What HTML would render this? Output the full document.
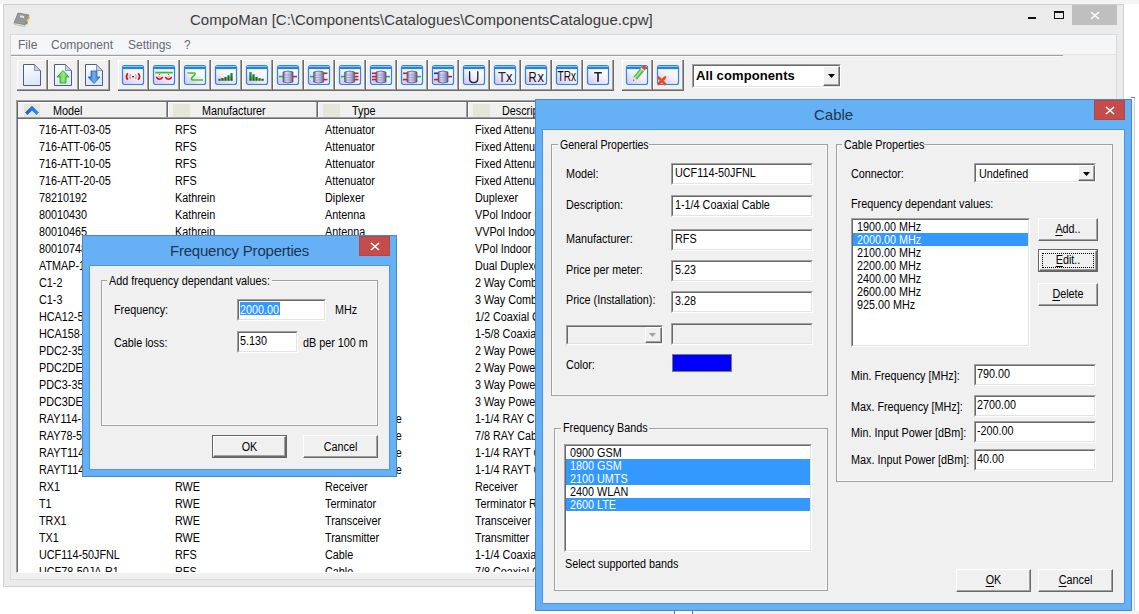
<!DOCTYPE html><html><head><meta charset="utf-8"><style>
html,body{margin:0;padding:0;width:1139px;height:614px;overflow:hidden;background:#fff;font-family:'Liberation Sans', sans-serif}
div{position:absolute}
svg{position:absolute;overflow:visible}

</style></head><body>
<div style="left:0px;top:0px;width:1139px;height:4px;background:#f3f4f6"></div>
<div style="left:3px;top:4px;width:1121px;height:583px;background:#ebebeb;border:1px solid #d0d0d0;box-sizing:border-box"></div>
<div style="left:1072px;top:5px;width:45px;height:20px;background:#bfbfbf"></div>
<svg style="left:1090px;top:11px" width="10" height="9"><path d="M1 1 L9 8 M9 1 L1 8" stroke="#fff" stroke-width="1.5"/></svg>
<div style="left:1028px;top:17px;width:8px;height:2px;background:#111"></div>
<div style="left:1054px;top:11px;width:10px;height:8px;border:1px solid #111;border-top-width:2px;box-sizing:border-box"></div>
<div style="left:190px;top:10px;font-size:15px;line-height:20px;color:#3b3b3b;white-space:pre;">CompoMan [C:\Components\Catalogues\ComponentsCatalogue.cpw]</div>
<div style="left:10px;top:34px;width:1107px;height:546px;background:#f0f0f0;border:1px solid #dadada;box-sizing:border-box"></div>
<div style="left:11px;top:35px;width:1105px;height:19px;background:#f5f6f7"></div>
<div style="left:11px;top:54px;width:1105px;height:1px;background:#e2e2e2"></div>
<div style="left:11px;top:55px;width:1052px;height:1px;background:#a0a0a0"></div>
<div style="left:11px;top:56px;width:1052px;height:1px;background:#fbfbfb"></div>
<div style="left:18px;top:35px;font-size:12px;line-height:20px;color:#676775;white-space:pre;">File</div>
<div style="left:51px;top:35px;font-size:12px;line-height:20px;color:#676775;white-space:pre;">Component</div>
<div style="left:128px;top:35px;font-size:12px;line-height:20px;color:#676775;white-space:pre;">Settings</div>
<div style="left:184px;top:35px;font-size:12px;line-height:20px;color:#676775;white-space:pre;">?</div>
<div style="left:17px;top:60px;width:31px;height:31px;background:#6a6a6a"></div>
<div style="left:17px;top:60px;width:30px;height:30px;background:#a0a0a0"></div>
<div style="left:17px;top:60px;width:29px;height:29px;background:#fff"></div>
<div style="left:18px;top:61px;width:28px;height:28px;background:#f0f0f0"></div>
<div style="left:48px;top:60px;width:31px;height:31px;background:#6a6a6a"></div>
<div style="left:48px;top:60px;width:30px;height:30px;background:#a0a0a0"></div>
<div style="left:48px;top:60px;width:29px;height:29px;background:#fff"></div>
<div style="left:49px;top:61px;width:28px;height:28px;background:#f0f0f0"></div>
<div style="left:79px;top:60px;width:31px;height:31px;background:#6a6a6a"></div>
<div style="left:79px;top:60px;width:30px;height:30px;background:#a0a0a0"></div>
<div style="left:79px;top:60px;width:29px;height:29px;background:#fff"></div>
<div style="left:80px;top:61px;width:28px;height:28px;background:#f0f0f0"></div>
<div style="left:118px;top:60px;width:31px;height:31px;background:#6a6a6a"></div>
<div style="left:118px;top:60px;width:30px;height:30px;background:#a0a0a0"></div>
<div style="left:118px;top:60px;width:29px;height:29px;background:#fff"></div>
<div style="left:119px;top:61px;width:28px;height:28px;background:#f0f0f0"></div>
<div style="left:149px;top:60px;width:31px;height:31px;background:#6a6a6a"></div>
<div style="left:149px;top:60px;width:30px;height:30px;background:#a0a0a0"></div>
<div style="left:149px;top:60px;width:29px;height:29px;background:#fff"></div>
<div style="left:150px;top:61px;width:28px;height:28px;background:#f0f0f0"></div>
<div style="left:180px;top:60px;width:31px;height:31px;background:#6a6a6a"></div>
<div style="left:180px;top:60px;width:30px;height:30px;background:#a0a0a0"></div>
<div style="left:180px;top:60px;width:29px;height:29px;background:#fff"></div>
<div style="left:181px;top:61px;width:28px;height:28px;background:#f0f0f0"></div>
<div style="left:211px;top:60px;width:31px;height:31px;background:#6a6a6a"></div>
<div style="left:211px;top:60px;width:30px;height:30px;background:#a0a0a0"></div>
<div style="left:211px;top:60px;width:29px;height:29px;background:#fff"></div>
<div style="left:212px;top:61px;width:28px;height:28px;background:#f0f0f0"></div>
<div style="left:242px;top:60px;width:31px;height:31px;background:#6a6a6a"></div>
<div style="left:242px;top:60px;width:30px;height:30px;background:#a0a0a0"></div>
<div style="left:242px;top:60px;width:29px;height:29px;background:#fff"></div>
<div style="left:243px;top:61px;width:28px;height:28px;background:#f0f0f0"></div>
<div style="left:273px;top:60px;width:31px;height:31px;background:#6a6a6a"></div>
<div style="left:273px;top:60px;width:30px;height:30px;background:#a0a0a0"></div>
<div style="left:273px;top:60px;width:29px;height:29px;background:#fff"></div>
<div style="left:274px;top:61px;width:28px;height:28px;background:#f0f0f0"></div>
<div style="left:304px;top:60px;width:31px;height:31px;background:#6a6a6a"></div>
<div style="left:304px;top:60px;width:30px;height:30px;background:#a0a0a0"></div>
<div style="left:304px;top:60px;width:29px;height:29px;background:#fff"></div>
<div style="left:305px;top:61px;width:28px;height:28px;background:#f0f0f0"></div>
<div style="left:335px;top:60px;width:31px;height:31px;background:#6a6a6a"></div>
<div style="left:335px;top:60px;width:30px;height:30px;background:#a0a0a0"></div>
<div style="left:335px;top:60px;width:29px;height:29px;background:#fff"></div>
<div style="left:336px;top:61px;width:28px;height:28px;background:#f0f0f0"></div>
<div style="left:366px;top:60px;width:31px;height:31px;background:#6a6a6a"></div>
<div style="left:366px;top:60px;width:30px;height:30px;background:#a0a0a0"></div>
<div style="left:366px;top:60px;width:29px;height:29px;background:#fff"></div>
<div style="left:367px;top:61px;width:28px;height:28px;background:#f0f0f0"></div>
<div style="left:397px;top:60px;width:31px;height:31px;background:#6a6a6a"></div>
<div style="left:397px;top:60px;width:30px;height:30px;background:#a0a0a0"></div>
<div style="left:397px;top:60px;width:29px;height:29px;background:#fff"></div>
<div style="left:398px;top:61px;width:28px;height:28px;background:#f0f0f0"></div>
<div style="left:428px;top:60px;width:31px;height:31px;background:#6a6a6a"></div>
<div style="left:428px;top:60px;width:30px;height:30px;background:#a0a0a0"></div>
<div style="left:428px;top:60px;width:29px;height:29px;background:#fff"></div>
<div style="left:429px;top:61px;width:28px;height:28px;background:#f0f0f0"></div>
<div style="left:459px;top:60px;width:31px;height:31px;background:#6a6a6a"></div>
<div style="left:459px;top:60px;width:30px;height:30px;background:#a0a0a0"></div>
<div style="left:459px;top:60px;width:29px;height:29px;background:#fff"></div>
<div style="left:460px;top:61px;width:28px;height:28px;background:#f0f0f0"></div>
<div style="left:490px;top:60px;width:31px;height:31px;background:#6a6a6a"></div>
<div style="left:490px;top:60px;width:30px;height:30px;background:#a0a0a0"></div>
<div style="left:490px;top:60px;width:29px;height:29px;background:#fff"></div>
<div style="left:491px;top:61px;width:28px;height:28px;background:#f0f0f0"></div>
<div style="left:521px;top:60px;width:31px;height:31px;background:#6a6a6a"></div>
<div style="left:521px;top:60px;width:30px;height:30px;background:#a0a0a0"></div>
<div style="left:521px;top:60px;width:29px;height:29px;background:#fff"></div>
<div style="left:522px;top:61px;width:28px;height:28px;background:#f0f0f0"></div>
<div style="left:552px;top:60px;width:31px;height:31px;background:#6a6a6a"></div>
<div style="left:552px;top:60px;width:30px;height:30px;background:#a0a0a0"></div>
<div style="left:552px;top:60px;width:29px;height:29px;background:#fff"></div>
<div style="left:553px;top:61px;width:28px;height:28px;background:#f0f0f0"></div>
<div style="left:583px;top:60px;width:31px;height:31px;background:#6a6a6a"></div>
<div style="left:583px;top:60px;width:30px;height:30px;background:#a0a0a0"></div>
<div style="left:583px;top:60px;width:29px;height:29px;background:#fff"></div>
<div style="left:584px;top:61px;width:28px;height:28px;background:#f0f0f0"></div>
<div style="left:622px;top:60px;width:31px;height:31px;background:#6a6a6a"></div>
<div style="left:622px;top:60px;width:30px;height:30px;background:#a0a0a0"></div>
<div style="left:622px;top:60px;width:29px;height:29px;background:#fff"></div>
<div style="left:623px;top:61px;width:28px;height:28px;background:#f0f0f0"></div>
<div style="left:653px;top:60px;width:31px;height:31px;background:#6a6a6a"></div>
<div style="left:653px;top:60px;width:30px;height:30px;background:#a0a0a0"></div>
<div style="left:653px;top:60px;width:29px;height:29px;background:#fff"></div>
<div style="left:654px;top:61px;width:28px;height:28px;background:#f0f0f0"></div>
<svg width="0" height="0" style="position:absolute"><defs>
<linearGradient id="wb" x1="0.8" y1="0" x2="0.2" y2="1"><stop offset="0" stop-color="#ffffff"/><stop offset="0.45" stop-color="#f6f5fd"/><stop offset="1" stop-color="#d4ccf0"/></linearGradient>
<linearGradient id="pg" x1="0" y1="0" x2="0.3" y2="1"><stop offset="0" stop-color="#ffffff"/><stop offset="1" stop-color="#dce8f8"/></linearGradient>
<linearGradient id="cy" x1="0" y1="0" x2="1" y2="0"><stop offset="0" stop-color="#5c5c90"/><stop offset="0.3" stop-color="#dcdcf4"/><stop offset="0.65" stop-color="#b4b4dc"/><stop offset="1" stop-color="#5a5a88"/></linearGradient>
<linearGradient id="ga" x1="0" y1="0" x2="1" y2="0"><stop offset="0" stop-color="#2fb52f"/><stop offset="0.5" stop-color="#8ef07a"/><stop offset="1" stop-color="#3cc03c"/></linearGradient>
<linearGradient id="ba" x1="0" y1="0" x2="1" y2="0"><stop offset="0" stop-color="#1f5fb8"/><stop offset="0.5" stop-color="#6fb0f0"/><stop offset="1" stop-color="#2a6cc8"/></linearGradient>
<linearGradient id="gp" x1="0" y1="0" x2="0" y2="1"><stop offset="0" stop-color="#3aa83a"/><stop offset="0.45" stop-color="#9af08a"/><stop offset="1" stop-color="#2e9a2e"/></linearGradient>
<linearGradient id="gb" x1="0" y1="7" x2="0" y2="16" gradientUnits="userSpaceOnUse"><stop offset="0" stop-color="#30a030"/><stop offset="1" stop-color="#0b5a10"/></linearGradient>
</defs></svg>
<svg style="left:23px;top:64px" width="19" height="23"><path d="M0.5 0.5 H11.5 L17.5 6.5 V21.5 H0.5 Z" fill="url(#pg)" stroke="#4d5c80"/><path d="M11.5 0.5 V6.5 H17.5 Z" fill="#c4d2e8" stroke="#6a7898" stroke-width="0.7"/></svg>
<svg style="left:54px;top:64px" width="19" height="23"><path d="M0.5 0.5 H11.5 L17.5 6.5 V21.5 H0.5 Z" fill="url(#pg)" stroke="#4d5c80"/><path d="M11.5 0.5 V6.5 H17.5 Z" fill="#c4d2e8" stroke="#6a7898" stroke-width="0.7"/><path d="M9 6.5 L15 13 H12 V19 H6 V13 H3 Z" fill="url(#ga)" stroke="#2a9a2a" stroke-width="0.8"/></svg>
<svg style="left:85px;top:64px" width="19" height="23"><path d="M0.5 0.5 H11.5 L17.5 6.5 V21.5 H0.5 Z" fill="url(#pg)" stroke="#4d5c80"/><path d="M11.5 0.5 V6.5 H17.5 Z" fill="#c4d2e8" stroke="#6a7898" stroke-width="0.7"/><path d="M6 7 H12 V13 H15 L9 19.5 L3 13 H6 Z" fill="url(#ba)" stroke="#2a64b8" stroke-width="0.8"/></svg>
<svg style="left:122px;top:65px" width="22" height="20"><rect x="0.5" y="0.5" width="21" height="19" rx="2" fill="url(#wb)" stroke="#2f84dc" stroke-width="1.2"/><rect x="1" y="1" width="20" height="1" fill="#7ccaf8"/><rect x="1" y="2" width="20" height="2" fill="#2c80d6"/><rect x="1.2" y="4" width="19.6" height="1" fill="#d8eefc"/><path d="M5.8 8.2 Q3.2 11.5 5.8 14.8" fill="none" stroke="#e01010" stroke-width="1.8"/><path d="M16.2 8.2 Q18.8 11.5 16.2 14.8" fill="none" stroke="#e01010" stroke-width="1.8"/><path d="M8.4 9 Q7.2 11.5 8.4 14" fill="none" stroke="#d06060" stroke-width="0.8"/><path d="M13.6 9 Q14.8 11.5 13.6 14" fill="none" stroke="#d06060" stroke-width="0.8"/><rect x="10.2" y="11" width="1.8" height="1.3" fill="#222"/></svg>
<svg style="left:153px;top:65px" width="22" height="20"><rect x="0.5" y="0.5" width="21" height="19" rx="2" fill="url(#wb)" stroke="#2f84dc" stroke-width="1.2"/><rect x="1" y="1" width="20" height="1" fill="#7ccaf8"/><rect x="1" y="2" width="20" height="2" fill="#2c80d6"/><rect x="1.2" y="4" width="19.6" height="1" fill="#d8eefc"/><path d="M2.3 7.6 H19.9" stroke="#30c030" stroke-width="1.8"/><path d="M3.3 12 Q6.5 16.5 9.7 12" fill="none" stroke="#e01010" stroke-width="1.7"/><path d="M12.3 12 Q15.5 16.5 18.7 12" fill="none" stroke="#e01010" stroke-width="1.7"/><path d="M5 11.2 Q6.5 12.5 8 11.2 M14 11.2 Q15.5 12.5 17 11.2" fill="none" stroke="#e09090" stroke-width="0.6"/><circle cx="6.5" cy="9.6" r="0.5" fill="#444"/><circle cx="15.5" cy="9.6" r="0.5" fill="#444"/></svg>
<svg style="left:184px;top:65px" width="22" height="20"><rect x="0.5" y="0.5" width="21" height="19" rx="2" fill="url(#wb)" stroke="#2f84dc" stroke-width="1.2"/><rect x="1" y="1" width="20" height="1" fill="#7ccaf8"/><rect x="1" y="2" width="20" height="2" fill="#2c80d6"/><rect x="1.2" y="4" width="19.6" height="1" fill="#d8eefc"/><path d="M3.5 8 H10 Q12 8 10.5 10 L8 12.5 Q6.5 14.5 9 15 H19" fill="none" stroke="#3cc828" stroke-width="1.7"/></svg>
<svg style="left:215px;top:65px" width="22" height="20"><rect x="0.5" y="0.5" width="21" height="19" rx="2" fill="url(#wb)" stroke="#2f84dc" stroke-width="1.2"/><rect x="1" y="1" width="20" height="1" fill="#7ccaf8"/><rect x="1" y="2" width="20" height="2" fill="#2c80d6"/><rect x="1.2" y="4" width="19.6" height="1" fill="#d8eefc"/><path d="M4.5 13.8 V15.8 M7.5 13 V15.8 M10.5 12 V15.8 M13.5 10.2 V15.8 M16.5 8 V15.8" stroke="url(#gb)" stroke-width="2.3"/></svg>
<svg style="left:246px;top:65px" width="22" height="20"><rect x="0.5" y="0.5" width="21" height="19" rx="2" fill="url(#wb)" stroke="#2f84dc" stroke-width="1.2"/><rect x="1" y="1" width="20" height="1" fill="#7ccaf8"/><rect x="1" y="2" width="20" height="2" fill="#2c80d6"/><rect x="1.2" y="4" width="19.6" height="1" fill="#d8eefc"/><path d="M4.5 7 V15.8 M7.5 9.2 V15.8 M10.5 12 V15.8 M13.5 13.2 V15.8 M16.5 13.8 V15.8" stroke="url(#gb)" stroke-width="2.3"/></svg>
<svg style="left:277px;top:65px" width="22" height="20"><rect x="0.5" y="0.5" width="21" height="19" rx="2" fill="url(#wb)" stroke="#2f84dc" stroke-width="1.2"/><rect x="1" y="1" width="20" height="1" fill="#7ccaf8"/><rect x="1" y="2" width="20" height="2" fill="#2c80d6"/><rect x="1.2" y="4" width="19.6" height="1" fill="#d8eefc"/><path d="M2 11.6 H6" stroke="#22bb33" stroke-width="1.6"/><path d="M16 11.6 H20" stroke="#e01818" stroke-width="1.6"/><path d="M6 7 Q11 5 16 7 V17 Q11 19 6 17 Z" fill="url(#cy)" stroke="#4a4a78" stroke-width="0.7"/><path d="M7 10 H15 M7 12.5 H15 M7 15 H15" stroke="#8a8ab8" stroke-width="0.6"/></svg>
<svg style="left:308px;top:65px" width="22" height="20"><rect x="0.5" y="0.5" width="21" height="19" rx="2" fill="url(#wb)" stroke="#2f84dc" stroke-width="1.2"/><rect x="1" y="1" width="20" height="1" fill="#7ccaf8"/><rect x="1" y="2" width="20" height="2" fill="#2c80d6"/><rect x="1.2" y="4" width="19.6" height="1" fill="#d8eefc"/><path d="M2 11.6 H6" stroke="#22bb33" stroke-width="1.6"/><path d="M15.5 8.3 H19.5" stroke="#e01818" stroke-width="1.6"/><path d="M15.5 14.6 H19.5" stroke="#e01818" stroke-width="1.6"/><path d="M5.699999999999999 7 Q10.7 5 15.7 7 V17 Q10.7 19 5.699999999999999 17 Z" fill="url(#cy)" stroke="#4a4a78" stroke-width="0.7"/><path d="M6.699999999999999 10 H14.7 M6.699999999999999 12.5 H14.7 M6.699999999999999 15 H14.7" stroke="#8a8ab8" stroke-width="0.6"/></svg>
<svg style="left:339px;top:65px" width="22" height="20"><rect x="0.5" y="0.5" width="21" height="19" rx="2" fill="url(#wb)" stroke="#2f84dc" stroke-width="1.2"/><rect x="1" y="1" width="20" height="1" fill="#7ccaf8"/><rect x="1" y="2" width="20" height="2" fill="#2c80d6"/><rect x="1.2" y="4" width="19.6" height="1" fill="#d8eefc"/><path d="M2 11.6 H6" stroke="#22bb33" stroke-width="1.6"/><path d="M15.5 8.3 H19.5" stroke="#e01818" stroke-width="1.6"/><path d="M15.5 11.6 H19.5" stroke="#e01818" stroke-width="1.6"/><path d="M15.5 14.6 H19.5" stroke="#e01818" stroke-width="1.6"/><path d="M5.699999999999999 7 Q10.7 5 15.7 7 V17 Q10.7 19 5.699999999999999 17 Z" fill="url(#cy)" stroke="#4a4a78" stroke-width="0.7"/><path d="M6.699999999999999 10 H14.7 M6.699999999999999 12.5 H14.7 M6.699999999999999 15 H14.7" stroke="#8a8ab8" stroke-width="0.6"/></svg>
<svg style="left:370px;top:65px" width="22" height="20"><rect x="0.5" y="0.5" width="21" height="19" rx="2" fill="url(#wb)" stroke="#2f84dc" stroke-width="1.2"/><rect x="1" y="1" width="20" height="1" fill="#7ccaf8"/><rect x="1" y="2" width="20" height="2" fill="#2c80d6"/><rect x="1.2" y="4" width="19.6" height="1" fill="#d8eefc"/><path d="M2 8.3 H6" stroke="#e01818" stroke-width="1.6"/><path d="M2 11.6 H6" stroke="#e01818" stroke-width="1.6"/><path d="M2 14.6 H6" stroke="#e01818" stroke-width="1.6"/><path d="M16 11.6 H20" stroke="#22bb33" stroke-width="1.6"/><path d="M6 7 Q11 5 16 7 V17 Q11 19 6 17 Z" fill="url(#cy)" stroke="#4a4a78" stroke-width="0.7"/><path d="M7 10 H15 M7 12.5 H15 M7 15 H15" stroke="#8a8ab8" stroke-width="0.6"/></svg>
<svg style="left:401px;top:65px" width="22" height="20"><rect x="0.5" y="0.5" width="21" height="19" rx="2" fill="url(#wb)" stroke="#2f84dc" stroke-width="1.2"/><rect x="1" y="1" width="20" height="1" fill="#7ccaf8"/><rect x="1" y="2" width="20" height="2" fill="#2c80d6"/><rect x="1.2" y="4" width="19.6" height="1" fill="#d8eefc"/><path d="M2 8.3 H6" stroke="#e01818" stroke-width="1.6"/><path d="M2 14.6 H6" stroke="#e01818" stroke-width="1.6"/><path d="M16 11.6 H20" stroke="#22bb33" stroke-width="1.6"/><path d="M6 7 Q11 5 16 7 V17 Q11 19 6 17 Z" fill="url(#cy)" stroke="#4a4a78" stroke-width="0.7"/><path d="M7 10 H15 M7 12.5 H15 M7 15 H15" stroke="#8a8ab8" stroke-width="0.6"/></svg>
<svg style="left:432px;top:65px" width="22" height="20"><rect x="0.5" y="0.5" width="21" height="19" rx="2" fill="url(#wb)" stroke="#2f84dc" stroke-width="1.2"/><rect x="1" y="1" width="20" height="1" fill="#7ccaf8"/><rect x="1" y="2" width="20" height="2" fill="#2c80d6"/><rect x="1.2" y="4" width="19.6" height="1" fill="#d8eefc"/><path d="M2 8.3 H6" stroke="#2020d0" stroke-width="1.6"/><path d="M2 14.6 H6" stroke="#e01818" stroke-width="1.6"/><path d="M16 11.6 H20" stroke="#a01090" stroke-width="1.6"/><path d="M6 7 Q11 5 16 7 V17 Q11 19 6 17 Z" fill="url(#cy)" stroke="#4a4a78" stroke-width="0.7"/><path d="M7 10 H15 M7 12.5 H15 M7 15 H15" stroke="#8a8ab8" stroke-width="0.6"/></svg>
<svg style="left:463px;top:65px" width="22" height="20"><rect x="0.5" y="0.5" width="21" height="19" rx="2" fill="url(#wb)" stroke="#2f84dc" stroke-width="1.2"/><rect x="1" y="1" width="20" height="1" fill="#7ccaf8"/><rect x="1" y="2" width="20" height="2" fill="#2c80d6"/><rect x="1.2" y="4" width="19.6" height="1" fill="#d8eefc"/><path d="M6.6 6.3 V13.5 Q6.6 17.6 10.7 17.6 Q14.8 17.6 14.8 13.5 V6.3" fill="none" stroke="#1a1a28" stroke-width="1.3"/></svg>
<svg style="left:494px;top:65px" width="22" height="20"><rect x="0.5" y="0.5" width="21" height="19" rx="2" fill="url(#wb)" stroke="#2f84dc" stroke-width="1.2"/><rect x="1" y="1" width="20" height="1" fill="#7ccaf8"/><rect x="1" y="2" width="20" height="2" fill="#2c80d6"/><rect x="1.2" y="4" width="19.6" height="1" fill="#d8eefc"/><text x="4" y="17" font-family="Liberation Sans" font-size="14.5" fill="#2a2a3a" textLength="8" lengthAdjust="spacingAndGlyphs">T</text><text x="12" y="17" font-family="Liberation Sans" font-size="14" fill="#111" textLength="6.5" lengthAdjust="spacingAndGlyphs">x</text></svg>
<svg style="left:525px;top:65px" width="22" height="20"><rect x="0.5" y="0.5" width="21" height="19" rx="2" fill="url(#wb)" stroke="#2f84dc" stroke-width="1.2"/><rect x="1" y="1" width="20" height="1" fill="#7ccaf8"/><rect x="1" y="2" width="20" height="2" fill="#2c80d6"/><rect x="1.2" y="4" width="19.6" height="1" fill="#d8eefc"/><text x="3.5" y="17" font-family="Liberation Sans" font-size="14.5" fill="#111" textLength="8.2" lengthAdjust="spacingAndGlyphs">R</text><text x="12.6" y="17" font-family="Liberation Sans" font-size="14" fill="#111" textLength="6.5" lengthAdjust="spacingAndGlyphs">x</text></svg>
<svg style="left:556px;top:65px" width="22" height="20"><rect x="0.5" y="0.5" width="21" height="19" rx="2" fill="url(#wb)" stroke="#2f84dc" stroke-width="1.2"/><rect x="1" y="1" width="20" height="1" fill="#7ccaf8"/><rect x="1" y="2" width="20" height="2" fill="#2c80d6"/><rect x="1.2" y="4" width="19.6" height="1" fill="#d8eefc"/><text x="1.6" y="16.2" font-family="Liberation Sans" font-size="13.8" fill="#111" textLength="18.6" lengthAdjust="spacingAndGlyphs">TRx</text></svg>
<svg style="left:587px;top:65px" width="22" height="20"><rect x="0.5" y="0.5" width="21" height="19" rx="2" fill="url(#wb)" stroke="#2f84dc" stroke-width="1.2"/><rect x="1" y="1" width="20" height="1" fill="#7ccaf8"/><rect x="1" y="2" width="20" height="2" fill="#2c80d6"/><rect x="1.2" y="4" width="19.6" height="1" fill="#d8eefc"/><path d="M7.2 7.7 H14.8 M11 7.7 V16.8" stroke="#1a1a28" stroke-width="1.6"/></svg>
<svg style="left:626px;top:65px" width="22" height="20"><rect x="0.5" y="0.5" width="21" height="19" rx="2" fill="url(#wb)" stroke="#2f84dc" stroke-width="1.2"/><rect x="1" y="1" width="20" height="1" fill="#7ccaf8"/><rect x="1" y="2" width="20" height="2" fill="#2c80d6"/><rect x="1.2" y="4" width="19.6" height="1" fill="#d8eefc"/></svg>
<svg style="left:620px;top:60px" width="30" height="30"><g transform="translate(13 20.8) rotate(-50)"><path d="M0 0 L3.5 -2.3 V2.3 Z" fill="#e8dcc8"/><path d="M0 0 L1.3 -0.9 V0.9 Z" fill="#555"/><rect x="3.5" y="-2.3" width="11.5" height="4.6" fill="url(#gp)"/><path d="M15 -2.3 H17.5 Q19.5 -2.3 19.5 0 Q19.5 2.3 17.5 2.3 H15 Z" fill="#e05030"/><rect x="14.2" y="-2.3" width="1.2" height="4.6" fill="#f0e0e0"/></g></svg>
<svg style="left:657px;top:65px" width="22" height="20"><rect x="0.5" y="0.5" width="21" height="19" rx="2" fill="url(#wb)" stroke="#2f84dc" stroke-width="1.2"/><rect x="1" y="1" width="20" height="1" fill="#7ccaf8"/><rect x="1" y="2" width="20" height="2" fill="#2c80d6"/><rect x="1.2" y="4" width="19.6" height="1" fill="#d8eefc"/></svg>
<svg style="left:656px;top:75px" width="12" height="12"><path d="M2.5 2.5 L9 9 M9 2.5 L2.5 9" stroke="#f04a1a" stroke-width="2.6" stroke-linecap="round"/></svg>
<svg style="left:13px;top:12px" width="18" height="16"><path d="M5 1 L16 3 L12 13 L1 11 Z" fill="#979797" stroke="#7d7d7d" stroke-width="0.8"/><path d="M1 11 L12 13 L11.5 14.5 L1.5 12.5 Z" fill="#f0f0f0" stroke="#8a8a8a" stroke-width="0.5"/><rect x="7" y="3.6" width="4" height="2" fill="#e8e8e8" transform="rotate(10 9 5)"/><path d="M15.5 4.5 L17 5 L16 7.5 L14.5 7 Z" fill="#e8a040"/><path d="M14.5 7 L16 7.5 L15 10 L13.5 9.5 Z" fill="#f0d040"/><path d="M13.5 9.5 L15 10 L14 12.5 L12.5 12 Z" fill="#48b040"/></svg>
<div style="left:692px;top:64px;width:149px;height:24px;background:#fff;border-top:1px solid #a0a0a0;border-left:1px solid #a0a0a0;border-bottom:1px solid #fff;border-right:1px solid #fff;box-sizing:border-box"></div>
<div style="left:693px;top:65px;width:147px;height:22px;border-top:1px solid #696969;border-left:1px solid #696969;border-bottom:1px solid #e3e3e3;border-right:1px solid #e3e3e3;box-sizing:border-box"></div>
<div style="left:823px;top:66px;width:17px;height:20px;background:#f0f0f0;border-top:1px solid #fff;border-left:1px solid #fff;border-bottom:1px solid #696969;border-right:1px solid #696969;box-sizing:border-box"></div>
<div style="left:824px;top:67px;width:15px;height:18px;border-bottom:1px solid #a0a0a0;border-right:1px solid #a0a0a0;box-sizing:border-box"></div>
<svg style="left:828px;top:74px" width="8" height="5"><path d="M0 0 H7 L3.5 4 Z" fill="#000"/></svg>
<div style="left:696px;top:66px;font-size:13px;line-height:20px;color:#000;white-space:pre;font-weight:bold;letter-spacing:0.1px">All components</div>
<div style="left:16px;top:100px;width:1100px;height:473px;background:#fff;border-top:1px solid #a0a0a0;border-left:1px solid #a0a0a0;border-bottom:1px solid #fff;box-sizing:border-box"></div>
<div style="left:17px;top:101px;width:1099px;height:471px;border-top:1px solid #696969;border-left:1px solid #696969;box-sizing:border-box"></div>
<div style="left:18px;top:102px;width:1098px;height:15px;background:#f0f0f0;border-top:1px solid #fff"></div>
<div style="left:18px;top:117px;width:1098px;height:1px;background:#a0a0a0"></div>
<div style="left:18px;top:118px;width:1098px;height:1px;background:#696969"></div>
<div style="left:166px;top:102px;width:1px;height:15px;background:#a0a0a0"></div>
<div style="left:167px;top:102px;width:1px;height:15px;background:#696969"></div>
<div style="left:168px;top:103px;width:1px;height:14px;background:#fff"></div>
<div style="left:316px;top:102px;width:1px;height:15px;background:#a0a0a0"></div>
<div style="left:317px;top:102px;width:1px;height:15px;background:#696969"></div>
<div style="left:318px;top:103px;width:1px;height:14px;background:#fff"></div>
<div style="left:466px;top:102px;width:1px;height:15px;background:#a0a0a0"></div>
<div style="left:467px;top:102px;width:1px;height:15px;background:#696969"></div>
<div style="left:468px;top:103px;width:1px;height:14px;background:#fff"></div>
<div style="left:616px;top:102px;width:1px;height:15px;background:#a0a0a0"></div>
<div style="left:617px;top:102px;width:1px;height:15px;background:#696969"></div>
<div style="left:618px;top:103px;width:1px;height:14px;background:#fff"></div>
<div style="left:24px;top:104px;width:16px;height:13px;background:#e6e6d8"></div>
<svg style="left:24px;top:104px" width="16" height="13"><defs><linearGradient id="ar" x1="0" y1="0" x2="1" y2="0"><stop offset="0" stop-color="#1a5ccc"/><stop offset="1" stop-color="#2590f0"/></linearGradient></defs><path d="M2.3 9.8 L8 4.1 L13.7 9.8" fill="none" stroke="url(#ar)" stroke-width="3.4"/></svg>
<div style="left:173px;top:104px;width:17px;height:13px;background:#e6e6d8"></div>
<div style="left:323px;top:104px;width:17px;height:13px;background:#e6e6d8"></div>
<div style="left:473px;top:104px;width:17px;height:13px;background:#e6e6d8"></div>
<div style="left:53px;top:101px;font-size:12px;line-height:20px;color:#000;white-space:pre;;transform:scaleX(0.9);transform-origin:left top">Model</div>
<div style="left:202px;top:101px;font-size:12px;line-height:20px;color:#000;white-space:pre;;transform:scaleX(0.9);transform-origin:left top">Manufacturer</div>
<div style="left:352px;top:101px;font-size:12px;line-height:20px;color:#000;white-space:pre;;transform:scaleX(0.9);transform-origin:left top">Type</div>
<div style="left:502px;top:101px;font-size:12px;line-height:20px;color:#000;white-space:pre;;transform:scaleX(0.9);transform-origin:left top">Description</div>
<div style="left:18px;top:119px;width:1098px;height:453px;overflow:hidden">
<div style="left:21px;top:1px;font-size:12px;line-height:20px;color:#000;white-space:pre;;transform:scaleX(0.9);transform-origin:left top">716-ATT-03-05</div>
<div style="left:157px;top:1px;font-size:12px;line-height:20px;color:#000;white-space:pre;;transform:scaleX(0.9);transform-origin:left top">RFS</div>
<div style="left:307px;top:1px;font-size:12px;line-height:20px;color:#000;white-space:pre;;transform:scaleX(0.9);transform-origin:left top">Attenuator</div>
<div style="left:457px;top:1px;font-size:12px;line-height:20px;color:#000;white-space:pre;;transform:scaleX(0.9);transform-origin:left top">Fixed Attenuator</div>
<div style="left:21px;top:18px;font-size:12px;line-height:20px;color:#000;white-space:pre;;transform:scaleX(0.9);transform-origin:left top">716-ATT-06-05</div>
<div style="left:157px;top:18px;font-size:12px;line-height:20px;color:#000;white-space:pre;;transform:scaleX(0.9);transform-origin:left top">RFS</div>
<div style="left:307px;top:18px;font-size:12px;line-height:20px;color:#000;white-space:pre;;transform:scaleX(0.9);transform-origin:left top">Attenuator</div>
<div style="left:457px;top:18px;font-size:12px;line-height:20px;color:#000;white-space:pre;;transform:scaleX(0.9);transform-origin:left top">Fixed Attenuator</div>
<div style="left:21px;top:35px;font-size:12px;line-height:20px;color:#000;white-space:pre;;transform:scaleX(0.9);transform-origin:left top">716-ATT-10-05</div>
<div style="left:157px;top:35px;font-size:12px;line-height:20px;color:#000;white-space:pre;;transform:scaleX(0.9);transform-origin:left top">RFS</div>
<div style="left:307px;top:35px;font-size:12px;line-height:20px;color:#000;white-space:pre;;transform:scaleX(0.9);transform-origin:left top">Attenuator</div>
<div style="left:457px;top:35px;font-size:12px;line-height:20px;color:#000;white-space:pre;;transform:scaleX(0.9);transform-origin:left top">Fixed Attenuator</div>
<div style="left:21px;top:52px;font-size:12px;line-height:20px;color:#000;white-space:pre;;transform:scaleX(0.9);transform-origin:left top">716-ATT-20-05</div>
<div style="left:157px;top:52px;font-size:12px;line-height:20px;color:#000;white-space:pre;;transform:scaleX(0.9);transform-origin:left top">RFS</div>
<div style="left:307px;top:52px;font-size:12px;line-height:20px;color:#000;white-space:pre;;transform:scaleX(0.9);transform-origin:left top">Attenuator</div>
<div style="left:457px;top:52px;font-size:12px;line-height:20px;color:#000;white-space:pre;;transform:scaleX(0.9);transform-origin:left top">Fixed Attenuator</div>
<div style="left:21px;top:69px;font-size:12px;line-height:20px;color:#000;white-space:pre;;transform:scaleX(0.9);transform-origin:left top">78210192</div>
<div style="left:157px;top:69px;font-size:12px;line-height:20px;color:#000;white-space:pre;;transform:scaleX(0.9);transform-origin:left top">Kathrein</div>
<div style="left:307px;top:69px;font-size:12px;line-height:20px;color:#000;white-space:pre;;transform:scaleX(0.9);transform-origin:left top">Diplexer</div>
<div style="left:457px;top:69px;font-size:12px;line-height:20px;color:#000;white-space:pre;;transform:scaleX(0.9);transform-origin:left top">Duplexer</div>
<div style="left:21px;top:86px;font-size:12px;line-height:20px;color:#000;white-space:pre;;transform:scaleX(0.9);transform-origin:left top">80010430</div>
<div style="left:157px;top:86px;font-size:12px;line-height:20px;color:#000;white-space:pre;;transform:scaleX(0.9);transform-origin:left top">Kathrein</div>
<div style="left:307px;top:86px;font-size:12px;line-height:20px;color:#000;white-space:pre;;transform:scaleX(0.9);transform-origin:left top">Antenna</div>
<div style="left:457px;top:86px;font-size:12px;line-height:20px;color:#000;white-space:pre;;transform:scaleX(0.9);transform-origin:left top">VPol Indoor Omni</div>
<div style="left:21px;top:103px;font-size:12px;line-height:20px;color:#000;white-space:pre;;transform:scaleX(0.9);transform-origin:left top">80010465</div>
<div style="left:157px;top:103px;font-size:12px;line-height:20px;color:#000;white-space:pre;;transform:scaleX(0.9);transform-origin:left top">Kathrein</div>
<div style="left:307px;top:103px;font-size:12px;line-height:20px;color:#000;white-space:pre;;transform:scaleX(0.9);transform-origin:left top">Antenna</div>
<div style="left:457px;top:103px;font-size:12px;line-height:20px;color:#000;white-space:pre;;transform:scaleX(0.9);transform-origin:left top">VVPol Indoor Omni</div>
<div style="left:21px;top:120px;font-size:12px;line-height:20px;color:#000;white-space:pre;;transform:scaleX(0.9);transform-origin:left top">80010748</div>
<div style="left:157px;top:120px;font-size:12px;line-height:20px;color:#000;white-space:pre;;transform:scaleX(0.9);transform-origin:left top">Kathrein</div>
<div style="left:307px;top:120px;font-size:12px;line-height:20px;color:#000;white-space:pre;;transform:scaleX(0.9);transform-origin:left top">Antenna</div>
<div style="left:457px;top:120px;font-size:12px;line-height:20px;color:#000;white-space:pre;;transform:scaleX(0.9);transform-origin:left top">VPol Indoor Omni</div>
<div style="left:21px;top:137px;font-size:12px;line-height:20px;color:#000;white-space:pre;;transform:scaleX(0.9);transform-origin:left top">ATMAP-1</div>
<div style="left:157px;top:137px;font-size:12px;line-height:20px;color:#000;white-space:pre;;transform:scaleX(0.9);transform-origin:left top">RFS</div>
<div style="left:307px;top:137px;font-size:12px;line-height:20px;color:#000;white-space:pre;;transform:scaleX(0.9);transform-origin:left top">Duplexer</div>
<div style="left:457px;top:137px;font-size:12px;line-height:20px;color:#000;white-space:pre;;transform:scaleX(0.9);transform-origin:left top">Dual Duplexer</div>
<div style="left:21px;top:154px;font-size:12px;line-height:20px;color:#000;white-space:pre;;transform:scaleX(0.9);transform-origin:left top">C1-2</div>
<div style="left:157px;top:154px;font-size:12px;line-height:20px;color:#000;white-space:pre;;transform:scaleX(0.9);transform-origin:left top">RFS</div>
<div style="left:307px;top:154px;font-size:12px;line-height:20px;color:#000;white-space:pre;;transform:scaleX(0.9);transform-origin:left top">Combiner</div>
<div style="left:457px;top:154px;font-size:12px;line-height:20px;color:#000;white-space:pre;;transform:scaleX(0.9);transform-origin:left top">2 Way Combiner</div>
<div style="left:21px;top:171px;font-size:12px;line-height:20px;color:#000;white-space:pre;;transform:scaleX(0.9);transform-origin:left top">C1-3</div>
<div style="left:157px;top:171px;font-size:12px;line-height:20px;color:#000;white-space:pre;;transform:scaleX(0.9);transform-origin:left top">RFS</div>
<div style="left:307px;top:171px;font-size:12px;line-height:20px;color:#000;white-space:pre;;transform:scaleX(0.9);transform-origin:left top">Combiner</div>
<div style="left:457px;top:171px;font-size:12px;line-height:20px;color:#000;white-space:pre;;transform:scaleX(0.9);transform-origin:left top">3 Way Combiner</div>
<div style="left:21px;top:188px;font-size:12px;line-height:20px;color:#000;white-space:pre;;transform:scaleX(0.9);transform-origin:left top">HCA12-50J</div>
<div style="left:157px;top:188px;font-size:12px;line-height:20px;color:#000;white-space:pre;;transform:scaleX(0.9);transform-origin:left top">RFS</div>
<div style="left:307px;top:188px;font-size:12px;line-height:20px;color:#000;white-space:pre;;transform:scaleX(0.9);transform-origin:left top">Cable</div>
<div style="left:457px;top:188px;font-size:12px;line-height:20px;color:#000;white-space:pre;;transform:scaleX(0.9);transform-origin:left top">1/2 Coaxial Cable</div>
<div style="left:21px;top:205px;font-size:12px;line-height:20px;color:#000;white-space:pre;;transform:scaleX(0.9);transform-origin:left top">HCA158-50J</div>
<div style="left:157px;top:205px;font-size:12px;line-height:20px;color:#000;white-space:pre;;transform:scaleX(0.9);transform-origin:left top">RFS</div>
<div style="left:307px;top:205px;font-size:12px;line-height:20px;color:#000;white-space:pre;;transform:scaleX(0.9);transform-origin:left top">Cable</div>
<div style="left:457px;top:205px;font-size:12px;line-height:20px;color:#000;white-space:pre;;transform:scaleX(0.9);transform-origin:left top">1-5/8 Coaxial Cable</div>
<div style="left:21px;top:222px;font-size:12px;line-height:20px;color:#000;white-space:pre;;transform:scaleX(0.9);transform-origin:left top">PDC2-350</div>
<div style="left:157px;top:222px;font-size:12px;line-height:20px;color:#000;white-space:pre;;transform:scaleX(0.9);transform-origin:left top">RFS</div>
<div style="left:307px;top:222px;font-size:12px;line-height:20px;color:#000;white-space:pre;;transform:scaleX(0.9);transform-origin:left top">Splitter</div>
<div style="left:457px;top:222px;font-size:12px;line-height:20px;color:#000;white-space:pre;;transform:scaleX(0.9);transform-origin:left top">2 Way Power Divider</div>
<div style="left:21px;top:239px;font-size:12px;line-height:20px;color:#000;white-space:pre;;transform:scaleX(0.9);transform-origin:left top">PDC2DE</div>
<div style="left:157px;top:239px;font-size:12px;line-height:20px;color:#000;white-space:pre;;transform:scaleX(0.9);transform-origin:left top">RFS</div>
<div style="left:307px;top:239px;font-size:12px;line-height:20px;color:#000;white-space:pre;;transform:scaleX(0.9);transform-origin:left top">Splitter</div>
<div style="left:457px;top:239px;font-size:12px;line-height:20px;color:#000;white-space:pre;;transform:scaleX(0.9);transform-origin:left top">2 Way Power Divider</div>
<div style="left:21px;top:256px;font-size:12px;line-height:20px;color:#000;white-space:pre;;transform:scaleX(0.9);transform-origin:left top">PDC3-350</div>
<div style="left:157px;top:256px;font-size:12px;line-height:20px;color:#000;white-space:pre;;transform:scaleX(0.9);transform-origin:left top">RFS</div>
<div style="left:307px;top:256px;font-size:12px;line-height:20px;color:#000;white-space:pre;;transform:scaleX(0.9);transform-origin:left top">Splitter</div>
<div style="left:457px;top:256px;font-size:12px;line-height:20px;color:#000;white-space:pre;;transform:scaleX(0.9);transform-origin:left top">3 Way Power Divider</div>
<div style="left:21px;top:273px;font-size:12px;line-height:20px;color:#000;white-space:pre;;transform:scaleX(0.9);transform-origin:left top">PDC3DE</div>
<div style="left:157px;top:273px;font-size:12px;line-height:20px;color:#000;white-space:pre;;transform:scaleX(0.9);transform-origin:left top">RFS</div>
<div style="left:307px;top:273px;font-size:12px;line-height:20px;color:#000;white-space:pre;;transform:scaleX(0.9);transform-origin:left top">Splitter</div>
<div style="left:457px;top:273px;font-size:12px;line-height:20px;color:#000;white-space:pre;;transform:scaleX(0.9);transform-origin:left top">3 Way Power Divider</div>
<div style="left:21px;top:290px;font-size:12px;line-height:20px;color:#000;white-space:pre;;transform:scaleX(0.9);transform-origin:left top">RAY114-50JFNA</div>
<div style="left:157px;top:290px;font-size:12px;line-height:20px;color:#000;white-space:pre;;transform:scaleX(0.9);transform-origin:left top">RFS</div>
<div style="left:307px;top:290px;font-size:12px;line-height:20px;color:#000;white-space:pre;;transform:scaleX(0.9);transform-origin:left top">Radiating Cable</div>
<div style="left:457px;top:290px;font-size:12px;line-height:20px;color:#000;white-space:pre;;transform:scaleX(0.9);transform-origin:left top">1-1/4 RAY Cable</div>
<div style="left:21px;top:307px;font-size:12px;line-height:20px;color:#000;white-space:pre;;transform:scaleX(0.9);transform-origin:left top">RAY78-50JFNA</div>
<div style="left:157px;top:307px;font-size:12px;line-height:20px;color:#000;white-space:pre;;transform:scaleX(0.9);transform-origin:left top">RFS</div>
<div style="left:307px;top:307px;font-size:12px;line-height:20px;color:#000;white-space:pre;;transform:scaleX(0.9);transform-origin:left top">Radiating Cable</div>
<div style="left:457px;top:307px;font-size:12px;line-height:20px;color:#000;white-space:pre;;transform:scaleX(0.9);transform-origin:left top">7/8 RAY Cable</div>
<div style="left:21px;top:324px;font-size:12px;line-height:20px;color:#000;white-space:pre;;transform:scaleX(0.9);transform-origin:left top">RAYT114-50J</div>
<div style="left:157px;top:324px;font-size:12px;line-height:20px;color:#000;white-space:pre;;transform:scaleX(0.9);transform-origin:left top">RFS</div>
<div style="left:307px;top:324px;font-size:12px;line-height:20px;color:#000;white-space:pre;;transform:scaleX(0.9);transform-origin:left top">Radiating Cable</div>
<div style="left:457px;top:324px;font-size:12px;line-height:20px;color:#000;white-space:pre;;transform:scaleX(0.9);transform-origin:left top">1-1/4 RAYT Cable</div>
<div style="left:21px;top:341px;font-size:12px;line-height:20px;color:#000;white-space:pre;;transform:scaleX(0.9);transform-origin:left top">RAYT114-50JFN</div>
<div style="left:157px;top:341px;font-size:12px;line-height:20px;color:#000;white-space:pre;;transform:scaleX(0.9);transform-origin:left top">RFS</div>
<div style="left:307px;top:341px;font-size:12px;line-height:20px;color:#000;white-space:pre;;transform:scaleX(0.9);transform-origin:left top">Radiating Cable</div>
<div style="left:457px;top:341px;font-size:12px;line-height:20px;color:#000;white-space:pre;;transform:scaleX(0.9);transform-origin:left top">1-1/4 RAYT Cable</div>
<div style="left:21px;top:358px;font-size:12px;line-height:20px;color:#000;white-space:pre;;transform:scaleX(0.9);transform-origin:left top">RX1</div>
<div style="left:157px;top:358px;font-size:12px;line-height:20px;color:#000;white-space:pre;;transform:scaleX(0.9);transform-origin:left top">RWE</div>
<div style="left:307px;top:358px;font-size:12px;line-height:20px;color:#000;white-space:pre;;transform:scaleX(0.9);transform-origin:left top">Receiver</div>
<div style="left:457px;top:358px;font-size:12px;line-height:20px;color:#000;white-space:pre;;transform:scaleX(0.9);transform-origin:left top">Receiver</div>
<div style="left:21px;top:375px;font-size:12px;line-height:20px;color:#000;white-space:pre;;transform:scaleX(0.9);transform-origin:left top">T1</div>
<div style="left:157px;top:375px;font-size:12px;line-height:20px;color:#000;white-space:pre;;transform:scaleX(0.9);transform-origin:left top">RWE</div>
<div style="left:307px;top:375px;font-size:12px;line-height:20px;color:#000;white-space:pre;;transform:scaleX(0.9);transform-origin:left top">Terminator</div>
<div style="left:457px;top:375px;font-size:12px;line-height:20px;color:#000;white-space:pre;;transform:scaleX(0.9);transform-origin:left top">Terminator RWE</div>
<div style="left:21px;top:392px;font-size:12px;line-height:20px;color:#000;white-space:pre;;transform:scaleX(0.9);transform-origin:left top">TRX1</div>
<div style="left:157px;top:392px;font-size:12px;line-height:20px;color:#000;white-space:pre;;transform:scaleX(0.9);transform-origin:left top">RWE</div>
<div style="left:307px;top:392px;font-size:12px;line-height:20px;color:#000;white-space:pre;;transform:scaleX(0.9);transform-origin:left top">Transceiver</div>
<div style="left:457px;top:392px;font-size:12px;line-height:20px;color:#000;white-space:pre;;transform:scaleX(0.9);transform-origin:left top">Transceiver</div>
<div style="left:21px;top:409px;font-size:12px;line-height:20px;color:#000;white-space:pre;;transform:scaleX(0.9);transform-origin:left top">TX1</div>
<div style="left:157px;top:409px;font-size:12px;line-height:20px;color:#000;white-space:pre;;transform:scaleX(0.9);transform-origin:left top">RWE</div>
<div style="left:307px;top:409px;font-size:12px;line-height:20px;color:#000;white-space:pre;;transform:scaleX(0.9);transform-origin:left top">Transmitter</div>
<div style="left:457px;top:409px;font-size:12px;line-height:20px;color:#000;white-space:pre;;transform:scaleX(0.9);transform-origin:left top">Transmitter</div>
<div style="left:21px;top:426px;font-size:12px;line-height:20px;color:#000;white-space:pre;;transform:scaleX(0.9);transform-origin:left top">UCF114-50JFNL</div>
<div style="left:157px;top:426px;font-size:12px;line-height:20px;color:#000;white-space:pre;;transform:scaleX(0.9);transform-origin:left top">RFS</div>
<div style="left:307px;top:426px;font-size:12px;line-height:20px;color:#000;white-space:pre;;transform:scaleX(0.9);transform-origin:left top">Cable</div>
<div style="left:457px;top:426px;font-size:12px;line-height:20px;color:#000;white-space:pre;;transform:scaleX(0.9);transform-origin:left top">1-1/4 Coaxial Cable</div>
<div style="left:21px;top:443px;font-size:12px;line-height:20px;color:#000;white-space:pre;;transform:scaleX(0.9);transform-origin:left top">UCF78-50JA-R1</div>
<div style="left:157px;top:443px;font-size:12px;line-height:20px;color:#000;white-space:pre;;transform:scaleX(0.9);transform-origin:left top">RFS</div>
<div style="left:307px;top:443px;font-size:12px;line-height:20px;color:#000;white-space:pre;;transform:scaleX(0.9);transform-origin:left top">Cable</div>
<div style="left:457px;top:443px;font-size:12px;line-height:20px;color:#000;white-space:pre;;transform:scaleX(0.9);transform-origin:left top">7/8 Coaxial Cable</div>
</div>
<div style="left:82px;top:235px;width:315px;height:242px;background:#66b1f6;border:1px solid #4d86c2;box-sizing:border-box"></div>
<div style="left:89px;top:265px;width:301px;height:205px;background:#f0f0f0;border:1px solid #5294d4;box-sizing:border-box"></div>
<div style="left:90px;top:266px;width:299px;height:203px;border:1px solid #e4f2fd;box-sizing:border-box"></div>
<div style="left:359px;top:236px;width:31px;height:20px;background:#c54c4c;border:1px solid #b04848;box-sizing:border-box"></div>
<svg style="left:370px;top:242px" width="10" height="9"><path d="M1 1 L9 8 M9 1 L1 8" stroke="#fff" stroke-width="1.6"/></svg>
<div style="left:170px;top:241px;font-size:15px;line-height:20px;color:#1b3553;white-space:pre;letter-spacing:-0.22px">Frequency Properties</div>
<div style="left:101px;top:280px;width:277px;height:146px;border:1px solid #a0a0a0;box-sizing:border-box"></div>
<div style="left:102px;top:281px;width:275px;height:144px;border:1px solid #fff;border-top-color:#fff;box-sizing:border-box;opacity:.6"></div>
<div style="left:107px;top:278px;width:165px;height:5px;background:#f0f0f0"></div>
<div style="left:109px;top:271px;font-size:12px;line-height:20px;color:#000;white-space:pre;;transform:scaleX(0.9);transform-origin:left top">Add frequency dependant values:</div>
<div style="left:114px;top:300px;font-size:12px;line-height:20px;color:#000;white-space:pre;;transform:scaleX(0.9);transform-origin:left top">Frequency:</div>
<div style="left:114px;top:333px;font-size:12px;line-height:20px;color:#000;white-space:pre;;transform:scaleX(0.9);transform-origin:left top">Cable loss:</div>
<div style="left:237px;top:299px;width:89px;height:22px;background:#fff;border-top:1px solid #a0a0a0;border-left:1px solid #a0a0a0;border-bottom:1px solid #fff;border-right:1px solid #fff;box-sizing:border-box"></div>
<div style="left:238px;top:300px;width:87px;height:20px;border-top:1px solid #696969;border-left:1px solid #696969;border-bottom:1px solid #e3e3e3;border-right:1px solid #e3e3e3;box-sizing:border-box"></div>
<div style="left:240px;top:302px;width:40px;height:13px;background:#3399ff"></div>
<div style="left:240px;top:300px;font-size:12px;line-height:20px;color:#fff;white-space:pre;;transform:scaleX(0.9);transform-origin:left top">2000.00</div>
<div style="left:335px;top:300px;font-size:12px;line-height:20px;color:#000;white-space:pre;;transform:scaleX(0.9);transform-origin:left top">MHz</div>
<div style="left:237px;top:331px;width:61px;height:22px;background:#fff;border-top:1px solid #a0a0a0;border-left:1px solid #a0a0a0;border-bottom:1px solid #fff;border-right:1px solid #fff;box-sizing:border-box"></div>
<div style="left:238px;top:332px;width:59px;height:20px;border-top:1px solid #696969;border-left:1px solid #696969;border-bottom:1px solid #e3e3e3;border-right:1px solid #e3e3e3;box-sizing:border-box"></div>
<div style="left:240px;top:331px;font-size:12px;line-height:20px;color:#000;white-space:pre;;transform:scaleX(0.9);transform-origin:left top">5.130</div>
<div style="left:303px;top:333px;font-size:12px;line-height:20px;color:#000;white-space:pre;;transform:scaleX(0.9);transform-origin:left top">dB per 100 m</div>
<div style="left:212px;top:435px;width:75px;height:23px;background:#f0f0f0;border:1px solid #646464;box-sizing:border-box"></div>
<div style="left:213px;top:436px;width:73px;height:21px;background:#f0f0f0;border-top:1px solid #fff;border-left:1px solid #fff;border-bottom:1px solid #696969;border-right:1px solid #696969;box-sizing:border-box"></div>
<div style="left:214px;top:437px;width:71px;height:19px;border-bottom:1px solid #a0a0a0;border-right:1px solid #a0a0a0;box-sizing:border-box"></div>
<div style="left:212px;top:437px;font-size:12px;line-height:20px;color:#000;white-space:pre;width:75px;text-align:center;;transform:scaleX(0.9);transform-origin:center top">OK</div>
<div style="left:303px;top:435px;width:75px;height:23px;background:#f0f0f0;border-top:1px solid #fff;border-left:1px solid #fff;border-bottom:1px solid #696969;border-right:1px solid #696969;box-sizing:border-box"></div>
<div style="left:304px;top:436px;width:73px;height:21px;border-bottom:1px solid #a0a0a0;border-right:1px solid #a0a0a0;box-sizing:border-box"></div>
<div style="left:303px;top:437px;font-size:12px;line-height:20px;color:#000;white-space:pre;width:75px;text-align:center;;transform:scaleX(0.9);transform-origin:center top">Cancel</div>
<div style="left:1132px;top:98px;width:2px;height:516px;background:#eef6fd"></div>
<div style="left:1134px;top:98px;width:1px;height:516px;background:#cfcfcf"></div>
<div style="left:1131px;top:97px;width:4px;height:1px;background:#6a88aa"></div>
<div style="left:640px;top:611px;width:500px;height:3px;background:#f0f0f0"></div>
<div style="left:674px;top:611px;width:1px;height:3px;background:#707070"></div>
<div style="left:692px;top:611px;width:1px;height:3px;background:#707070"></div>
<div style="left:675px;top:611px;width:17px;height:3px;background:#fff"></div>
<div style="left:535px;top:99px;width:597px;height:512px;background:#66b1f6;border:1px solid #4d86c2;box-sizing:border-box"></div>
<div style="left:542px;top:129px;width:583px;height:475px;background:#f0f0f0;border:1px solid #5294d4;box-sizing:border-box"></div>
<div style="left:543px;top:130px;width:581px;height:473px;border:1px solid #e4f2fd;box-sizing:border-box"></div>
<div style="left:1094px;top:100px;width:31px;height:20px;background:#c54c4c;border:1px solid #b04848;box-sizing:border-box"></div>
<svg style="left:1105px;top:106px" width="10" height="9"><path d="M1 1 L9 8 M9 1 L1 8" stroke="#fff" stroke-width="1.6"/></svg>
<div style="left:814px;top:105px;font-size:15px;line-height:20px;color:#1b3553;white-space:pre;">Cable</div>
<div style="left:551px;top:144px;width:277px;height:252px;border:1px solid #a0a0a0;box-sizing:border-box"></div>
<div style="left:552px;top:145px;width:275px;height:250px;border:1px solid #fff;border-top-color:#fff;box-sizing:border-box;opacity:.6"></div>
<div style="left:558px;top:142px;width:91px;height:5px;background:#f0f0f0"></div>
<div style="left:560px;top:135px;font-size:12px;line-height:20px;color:#000;white-space:pre;;transform:scaleX(0.88);transform-origin:left top">General Properties</div>
<div style="left:566px;top:164px;font-size:12px;line-height:20px;color:#000;white-space:pre;;transform:scaleX(0.9);transform-origin:left top">Model:</div>
<div style="left:671px;top:163px;width:142px;height:22px;background:#fff;border-top:1px solid #a0a0a0;border-left:1px solid #a0a0a0;border-bottom:1px solid #fff;border-right:1px solid #fff;box-sizing:border-box"></div>
<div style="left:672px;top:164px;width:140px;height:20px;border-top:1px solid #696969;border-left:1px solid #696969;border-bottom:1px solid #e3e3e3;border-right:1px solid #e3e3e3;box-sizing:border-box"></div>
<div style="left:675px;top:163px;font-size:12px;line-height:20px;color:#000;white-space:pre;;transform:scaleX(0.9);transform-origin:left top">UCF114-50JFNL</div>
<div style="left:566px;top:195px;font-size:12px;line-height:20px;color:#000;white-space:pre;;transform:scaleX(0.9);transform-origin:left top">Description:</div>
<div style="left:671px;top:195px;width:142px;height:22px;background:#fff;border-top:1px solid #a0a0a0;border-left:1px solid #a0a0a0;border-bottom:1px solid #fff;border-right:1px solid #fff;box-sizing:border-box"></div>
<div style="left:672px;top:196px;width:140px;height:20px;border-top:1px solid #696969;border-left:1px solid #696969;border-bottom:1px solid #e3e3e3;border-right:1px solid #e3e3e3;box-sizing:border-box"></div>
<div style="left:675px;top:195px;font-size:12px;line-height:20px;color:#000;white-space:pre;;transform:scaleX(0.9);transform-origin:left top">1-1/4 Coaxial Cable</div>
<div style="left:566px;top:229px;font-size:12px;line-height:20px;color:#000;white-space:pre;;transform:scaleX(0.9);transform-origin:left top">Manufacturer:</div>
<div style="left:671px;top:229px;width:142px;height:22px;background:#fff;border-top:1px solid #a0a0a0;border-left:1px solid #a0a0a0;border-bottom:1px solid #fff;border-right:1px solid #fff;box-sizing:border-box"></div>
<div style="left:672px;top:230px;width:140px;height:20px;border-top:1px solid #696969;border-left:1px solid #696969;border-bottom:1px solid #e3e3e3;border-right:1px solid #e3e3e3;box-sizing:border-box"></div>
<div style="left:675px;top:229px;font-size:12px;line-height:20px;color:#000;white-space:pre;;transform:scaleX(0.9);transform-origin:left top">RFS</div>
<div style="left:566px;top:260px;font-size:12px;line-height:20px;color:#000;white-space:pre;;transform:scaleX(0.9);transform-origin:left top">Price per meter:</div>
<div style="left:671px;top:260px;width:142px;height:22px;background:#fff;border-top:1px solid #a0a0a0;border-left:1px solid #a0a0a0;border-bottom:1px solid #fff;border-right:1px solid #fff;box-sizing:border-box"></div>
<div style="left:672px;top:261px;width:140px;height:20px;border-top:1px solid #696969;border-left:1px solid #696969;border-bottom:1px solid #e3e3e3;border-right:1px solid #e3e3e3;box-sizing:border-box"></div>
<div style="left:675px;top:260px;font-size:12px;line-height:20px;color:#000;white-space:pre;;transform:scaleX(0.9);transform-origin:left top">5.23</div>
<div style="left:566px;top:290px;font-size:12px;line-height:20px;color:#000;white-space:pre;;transform:scaleX(0.9);transform-origin:left top">Price (Installation):</div>
<div style="left:671px;top:291px;width:142px;height:22px;background:#fff;border-top:1px solid #a0a0a0;border-left:1px solid #a0a0a0;border-bottom:1px solid #fff;border-right:1px solid #fff;box-sizing:border-box"></div>
<div style="left:672px;top:292px;width:140px;height:20px;border-top:1px solid #696969;border-left:1px solid #696969;border-bottom:1px solid #e3e3e3;border-right:1px solid #e3e3e3;box-sizing:border-box"></div>
<div style="left:675px;top:291px;font-size:12px;line-height:20px;color:#000;white-space:pre;;transform:scaleX(0.9);transform-origin:left top">3.28</div>
<div style="left:566px;top:325px;width:97px;height:20px;background:#f0f0f0;border-top:1px solid #a0a0a0;border-left:1px solid #a0a0a0;border-bottom:1px solid #fff;border-right:1px solid #fff;box-sizing:border-box"></div>
<div style="left:567px;top:326px;width:95px;height:18px;border-top:1px solid #696969;border-left:1px solid #696969;border-bottom:1px solid #e3e3e3;border-right:1px solid #e3e3e3;box-sizing:border-box"></div>
<div style="left:645px;top:327px;width:17px;height:16px;background:#f0f0f0;border-top:1px solid #fff;border-left:1px solid #fff;border-bottom:1px solid #696969;border-right:1px solid #696969;box-sizing:border-box"></div>
<div style="left:646px;top:328px;width:15px;height:14px;border-bottom:1px solid #a0a0a0;border-right:1px solid #a0a0a0;box-sizing:border-box"></div>
<svg style="left:649px;top:333px" width="8" height="5"><path d="M0 0 H7 L3.5 4 Z" fill="#a0a0a0"/></svg>
<div style="left:671px;top:323px;width:142px;height:22px;background:#f0f0f0;border-top:1px solid #a0a0a0;border-left:1px solid #a0a0a0;border-bottom:1px solid #fff;border-right:1px solid #fff;box-sizing:border-box"></div>
<div style="left:672px;top:324px;width:140px;height:20px;border-top:1px solid #696969;border-left:1px solid #696969;border-bottom:1px solid #e3e3e3;border-right:1px solid #e3e3e3;box-sizing:border-box"></div>
<div style="left:566px;top:355px;font-size:12px;line-height:20px;color:#000;white-space:pre;;transform:scaleX(0.9);transform-origin:left top">Color:</div>
<div style="left:672px;top:354px;width:60px;height:18px;background:#0000ff;border:1px solid #7a7a7a;box-sizing:border-box"></div>
<div style="left:554px;top:428px;width:274px;height:163px;border:1px solid #a0a0a0;box-sizing:border-box"></div>
<div style="left:555px;top:429px;width:272px;height:161px;border:1px solid #fff;border-top-color:#fff;box-sizing:border-box;opacity:.6"></div>
<div style="left:561px;top:426px;width:88px;height:5px;background:#f0f0f0"></div>
<div style="left:563px;top:418px;font-size:12px;line-height:20px;color:#000;white-space:pre;;transform:scaleX(0.9);transform-origin:left top">Frequency Bands</div>
<div style="left:564px;top:444px;width:248px;height:108px;background:#fff;border-top:1px solid #a0a0a0;border-left:1px solid #a0a0a0;border-bottom:1px solid #fff;border-right:1px solid #fff;box-sizing:border-box"></div>
<div style="left:565px;top:445px;width:246px;height:106px;border-top:1px solid #696969;border-left:1px solid #696969;border-bottom:1px solid #e3e3e3;border-right:1px solid #e3e3e3;box-sizing:border-box"></div>
<div style="left:570px;top:443px;font-size:12px;line-height:20px;color:#000;white-space:pre;;transform:scaleX(0.9);transform-origin:left top">0900 GSM</div>
<div style="left:566px;top:459px;width:244px;height:13px;background:#3399ff"></div>
<div style="left:570px;top:456px;font-size:12px;line-height:20px;color:#fff;white-space:pre;;transform:scaleX(0.9);transform-origin:left top">1800 GSM</div>
<div style="left:566px;top:472px;width:244px;height:13px;background:#3399ff"></div>
<div style="left:570px;top:469px;font-size:12px;line-height:20px;color:#fff;white-space:pre;;transform:scaleX(0.9);transform-origin:left top">2100 UMTS</div>
<div style="left:570px;top:482px;font-size:12px;line-height:20px;color:#000;white-space:pre;;transform:scaleX(0.9);transform-origin:left top">2400 WLAN</div>
<div style="left:566px;top:498px;width:244px;height:13px;background:#3399ff"></div>
<div style="left:570px;top:495px;font-size:12px;line-height:20px;color:#fff;white-space:pre;;transform:scaleX(0.9);transform-origin:left top">2600 LTE</div>
<div style="left:565px;top:554px;font-size:12px;line-height:20px;color:#000;white-space:pre;;transform:scaleX(0.9);transform-origin:left top">Select supported bands</div>
<div style="left:836px;top:144px;width:277px;height:338px;border:1px solid #a0a0a0;box-sizing:border-box"></div>
<div style="left:837px;top:145px;width:275px;height:336px;border:1px solid #fff;border-top-color:#fff;box-sizing:border-box;opacity:.6"></div>
<div style="left:842px;top:142px;width:82px;height:5px;background:#f0f0f0"></div>
<div style="left:844px;top:135px;font-size:12px;line-height:20px;color:#000;white-space:pre;;transform:scaleX(0.9);transform-origin:left top">Cable Properties</div>
<div style="left:851px;top:164px;font-size:12px;line-height:20px;color:#000;white-space:pre;;transform:scaleX(0.9);transform-origin:left top">Connector:</div>
<div style="left:974px;top:163px;width:122px;height:20px;background:#fff;border-top:1px solid #a0a0a0;border-left:1px solid #a0a0a0;border-bottom:1px solid #fff;border-right:1px solid #fff;box-sizing:border-box"></div>
<div style="left:975px;top:164px;width:120px;height:18px;border-top:1px solid #696969;border-left:1px solid #696969;border-bottom:1px solid #e3e3e3;border-right:1px solid #e3e3e3;box-sizing:border-box"></div>
<div style="left:1078px;top:165px;width:17px;height:16px;background:#f0f0f0;border-top:1px solid #fff;border-left:1px solid #fff;border-bottom:1px solid #696969;border-right:1px solid #696969;box-sizing:border-box"></div>
<div style="left:1079px;top:166px;width:15px;height:14px;border-bottom:1px solid #a0a0a0;border-right:1px solid #a0a0a0;box-sizing:border-box"></div>
<svg style="left:1083px;top:172px" width="8" height="5"><path d="M0 0 H7 L3.5 4 Z" fill="#000"/></svg>
<div style="left:979px;top:164px;font-size:12px;line-height:20px;color:#000;white-space:pre;;transform:scaleX(0.9);transform-origin:left top">Undefined</div>
<div style="left:851px;top:194px;font-size:12px;line-height:20px;color:#000;white-space:pre;;transform:scaleX(0.9);transform-origin:left top">Frequency dependant values:</div>
<div style="left:851px;top:218px;width:179px;height:129px;background:#fff;border-top:1px solid #a0a0a0;border-left:1px solid #a0a0a0;border-bottom:1px solid #fff;border-right:1px solid #fff;box-sizing:border-box"></div>
<div style="left:852px;top:219px;width:177px;height:127px;border-top:1px solid #696969;border-left:1px solid #696969;border-bottom:1px solid #e3e3e3;border-right:1px solid #e3e3e3;box-sizing:border-box"></div>
<div style="left:857px;top:217px;font-size:12px;line-height:20px;color:#000;white-space:pre;;transform:scaleX(0.9);transform-origin:left top">1900.00 MHz</div>
<div style="left:853px;top:233px;width:175px;height:13px;background:#3399ff"></div>
<div style="left:857px;top:230px;font-size:12px;line-height:20px;color:#fff;white-space:pre;;transform:scaleX(0.9);transform-origin:left top">2000.00 MHz</div>
<div style="left:857px;top:243px;font-size:12px;line-height:20px;color:#000;white-space:pre;;transform:scaleX(0.9);transform-origin:left top">2100.00 MHz</div>
<div style="left:857px;top:256px;font-size:12px;line-height:20px;color:#000;white-space:pre;;transform:scaleX(0.9);transform-origin:left top">2200.00 MHz</div>
<div style="left:857px;top:269px;font-size:12px;line-height:20px;color:#000;white-space:pre;;transform:scaleX(0.9);transform-origin:left top">2400.00 MHz</div>
<div style="left:857px;top:282px;font-size:12px;line-height:20px;color:#000;white-space:pre;;transform:scaleX(0.9);transform-origin:left top">2600.00 MHz</div>
<div style="left:857px;top:295px;font-size:12px;line-height:20px;color:#000;white-space:pre;;transform:scaleX(0.9);transform-origin:left top">925.00 MHz</div>
<div style="left:1038px;top:218px;width:60px;height:23px;background:#f0f0f0;border-top:1px solid #fff;border-left:1px solid #fff;border-bottom:1px solid #696969;border-right:1px solid #696969;box-sizing:border-box"></div>
<div style="left:1039px;top:219px;width:58px;height:21px;border-bottom:1px solid #a0a0a0;border-right:1px solid #a0a0a0;box-sizing:border-box"></div>
<div style="left:1038px;top:219px;font-size:12px;line-height:20px;color:#000;white-space:pre;width:60px;text-align:center;;transform:scaleX(0.9);transform-origin:center top"><u style="text-decoration-thickness:1px;text-underline-offset:1.5px">A</u>dd..</div>
<div style="left:1038px;top:249px;width:60px;height:23px;background:#f0f0f0;border:1px solid #646464;box-sizing:border-box"></div>
<div style="left:1039px;top:250px;width:58px;height:21px;background:#f0f0f0;border-top:1px solid #fff;border-left:1px solid #fff;border-bottom:1px solid #696969;border-right:1px solid #696969;box-sizing:border-box"></div>
<div style="left:1040px;top:251px;width:56px;height:19px;border-bottom:1px solid #a0a0a0;border-right:1px solid #a0a0a0;box-sizing:border-box"></div>
<div style="left:1042px;top:253px;width:52px;height:15px;border:1px dotted #000;box-sizing:border-box"></div>
<div style="left:1038px;top:250px;font-size:12px;line-height:20px;color:#000;white-space:pre;width:60px;text-align:center;;transform:scaleX(0.9);transform-origin:center top"><u style="text-decoration-thickness:1px;text-underline-offset:1.5px">E</u>dit..</div>
<div style="left:1038px;top:283px;width:60px;height:23px;background:#f0f0f0;border-top:1px solid #fff;border-left:1px solid #fff;border-bottom:1px solid #696969;border-right:1px solid #696969;box-sizing:border-box"></div>
<div style="left:1039px;top:284px;width:58px;height:21px;border-bottom:1px solid #a0a0a0;border-right:1px solid #a0a0a0;box-sizing:border-box"></div>
<div style="left:1038px;top:284px;font-size:12px;line-height:20px;color:#000;white-space:pre;width:60px;text-align:center;;transform:scaleX(0.9);transform-origin:center top"><u style="text-decoration-thickness:1px;text-underline-offset:1.5px">D</u>elete</div>
<div style="left:851px;top:366px;font-size:12px;line-height:20px;color:#000;white-space:pre;;transform:scaleX(0.9);transform-origin:left top">Min. Frequency [MHz]:</div>
<div style="left:974px;top:364px;width:122px;height:22px;background:#fff;border-top:1px solid #a0a0a0;border-left:1px solid #a0a0a0;border-bottom:1px solid #fff;border-right:1px solid #fff;box-sizing:border-box"></div>
<div style="left:975px;top:365px;width:120px;height:20px;border-top:1px solid #696969;border-left:1px solid #696969;border-bottom:1px solid #e3e3e3;border-right:1px solid #e3e3e3;box-sizing:border-box"></div>
<div style="left:977px;top:364px;font-size:12px;line-height:20px;color:#000;white-space:pre;;transform:scaleX(0.9);transform-origin:left top">790.00</div>
<div style="left:851px;top:397px;font-size:12px;line-height:20px;color:#000;white-space:pre;;transform:scaleX(0.9);transform-origin:left top">Max. Frequency [MHz]:</div>
<div style="left:974px;top:395px;width:122px;height:22px;background:#fff;border-top:1px solid #a0a0a0;border-left:1px solid #a0a0a0;border-bottom:1px solid #fff;border-right:1px solid #fff;box-sizing:border-box"></div>
<div style="left:975px;top:396px;width:120px;height:20px;border-top:1px solid #696969;border-left:1px solid #696969;border-bottom:1px solid #e3e3e3;border-right:1px solid #e3e3e3;box-sizing:border-box"></div>
<div style="left:977px;top:395px;font-size:12px;line-height:20px;color:#000;white-space:pre;;transform:scaleX(0.9);transform-origin:left top">2700.00</div>
<div style="left:851px;top:423px;font-size:12px;line-height:20px;color:#000;white-space:pre;;transform:scaleX(0.9);transform-origin:left top">Min. Input Power [dBm]:</div>
<div style="left:974px;top:421px;width:122px;height:22px;background:#fff;border-top:1px solid #a0a0a0;border-left:1px solid #a0a0a0;border-bottom:1px solid #fff;border-right:1px solid #fff;box-sizing:border-box"></div>
<div style="left:975px;top:422px;width:120px;height:20px;border-top:1px solid #696969;border-left:1px solid #696969;border-bottom:1px solid #e3e3e3;border-right:1px solid #e3e3e3;box-sizing:border-box"></div>
<div style="left:977px;top:421px;font-size:12px;line-height:20px;color:#000;white-space:pre;;transform:scaleX(0.9);transform-origin:left top">-200.00</div>
<div style="left:851px;top:450px;font-size:12px;line-height:20px;color:#000;white-space:pre;;transform:scaleX(0.9);transform-origin:left top">Max. Input Power [dBm]:</div>
<div style="left:974px;top:449px;width:122px;height:22px;background:#fff;border-top:1px solid #a0a0a0;border-left:1px solid #a0a0a0;border-bottom:1px solid #fff;border-right:1px solid #fff;box-sizing:border-box"></div>
<div style="left:975px;top:450px;width:120px;height:20px;border-top:1px solid #696969;border-left:1px solid #696969;border-bottom:1px solid #e3e3e3;border-right:1px solid #e3e3e3;box-sizing:border-box"></div>
<div style="left:977px;top:449px;font-size:12px;line-height:20px;color:#000;white-space:pre;;transform:scaleX(0.9);transform-origin:left top">40.00</div>
<div style="left:956px;top:569px;width:75px;height:23px;background:#f0f0f0;border-top:1px solid #fff;border-left:1px solid #fff;border-bottom:1px solid #696969;border-right:1px solid #696969;box-sizing:border-box"></div>
<div style="left:957px;top:570px;width:73px;height:21px;border-bottom:1px solid #a0a0a0;border-right:1px solid #a0a0a0;box-sizing:border-box"></div>
<div style="left:956px;top:570px;font-size:12px;line-height:20px;color:#000;white-space:pre;width:75px;text-align:center;;transform:scaleX(0.9);transform-origin:center top"><u style="text-decoration-thickness:1px;text-underline-offset:1.5px">O</u>K</div>
<div style="left:1038px;top:569px;width:75px;height:23px;background:#f0f0f0;border-top:1px solid #fff;border-left:1px solid #fff;border-bottom:1px solid #696969;border-right:1px solid #696969;box-sizing:border-box"></div>
<div style="left:1039px;top:570px;width:73px;height:21px;border-bottom:1px solid #a0a0a0;border-right:1px solid #a0a0a0;box-sizing:border-box"></div>
<div style="left:1038px;top:570px;font-size:12px;line-height:20px;color:#000;white-space:pre;width:75px;text-align:center;;transform:scaleX(0.9);transform-origin:center top"><u style="text-decoration-thickness:1px;text-underline-offset:1.5px">C</u>ancel</div>
</body></html>
